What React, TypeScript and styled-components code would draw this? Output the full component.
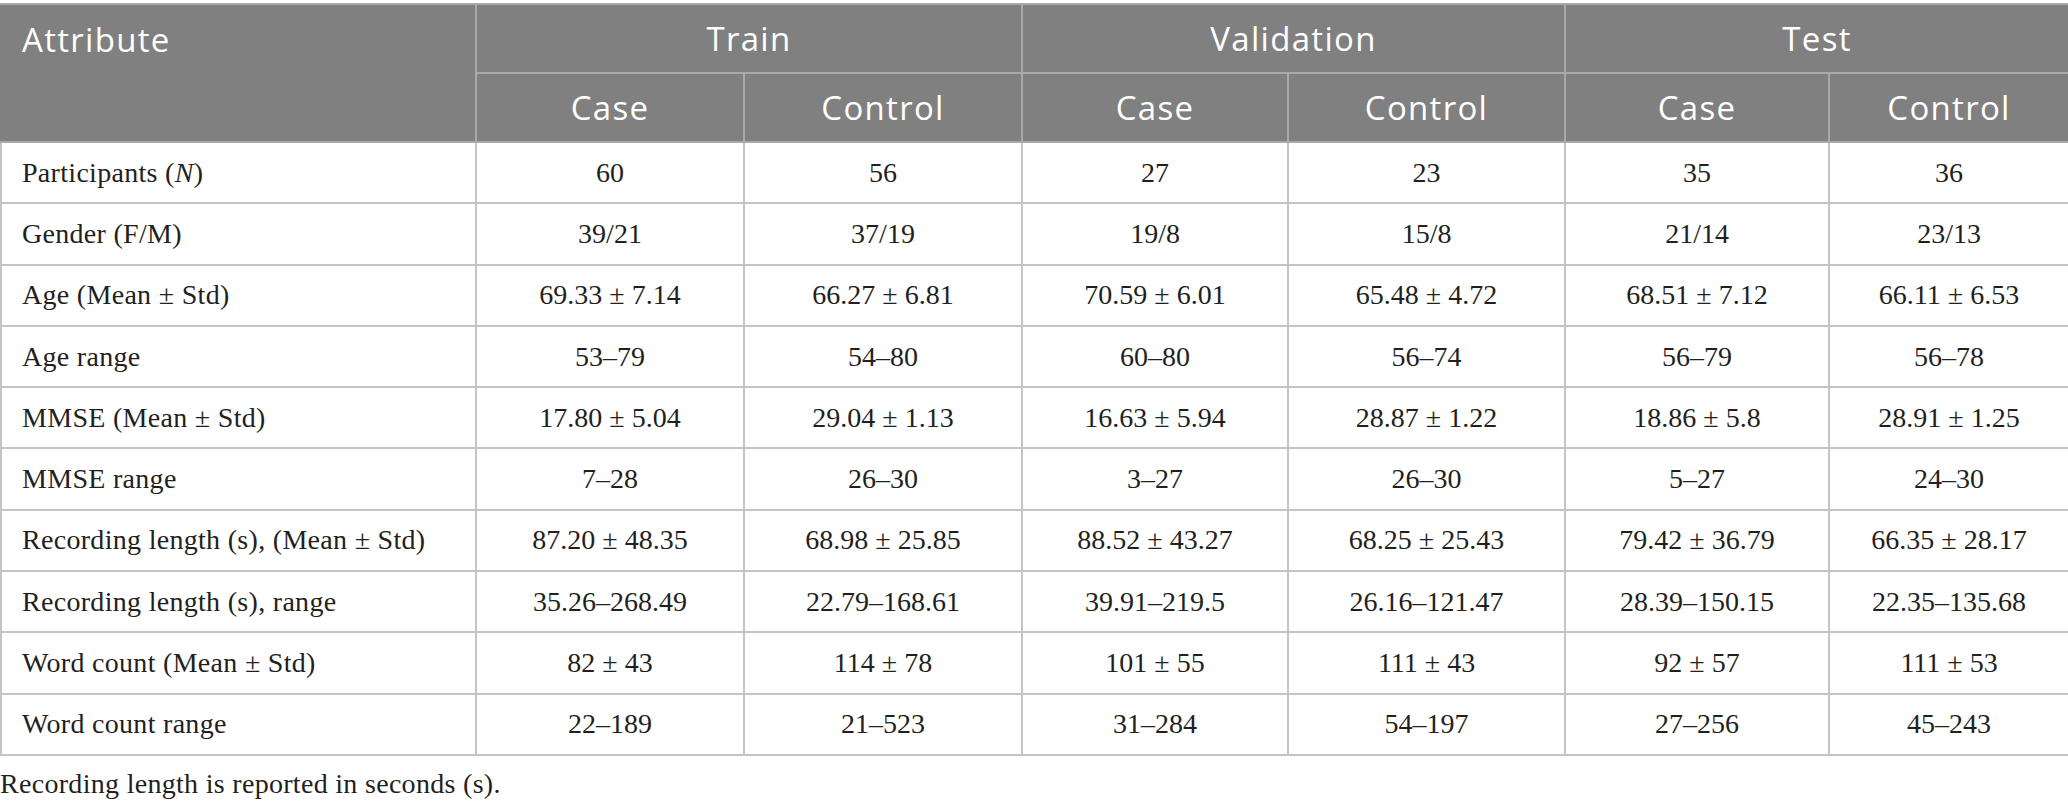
import React from "react";
import styled, { createGlobalStyle } from "styled-components";

const GlobalStyle = createGlobalStyle`
  body {
    margin: 0;
    background: #fff;
  }
`;

type Row = { label: React.ReactNode; values: string[] };

const rows: Row[] = [
  {
    label: (
      <>
        Participants (<i>N</i>)
      </>
    ),
    values: ["60", "56", "27", "23", "35", "36"],
  },
  { label: "Gender (F/M)", values: ["39/21", "37/19", "19/8", "15/8", "21/14", "23/13"] },
  {
    label: "Age (Mean ± Std)",
    values: ["69.33 ± 7.14", "66.27 ± 6.81", "70.59 ± 6.01", "65.48 ± 4.72", "68.51 ± 7.12", "66.11 ± 6.53"],
  },
  { label: "Age range", values: ["53–79", "54–80", "60–80", "56–74", "56–79", "56–78"] },
  {
    label: "MMSE (Mean ± Std)",
    values: ["17.80 ± 5.04", "29.04 ± 1.13", "16.63 ± 5.94", "28.87 ± 1.22", "18.86 ± 5.8", "28.91 ± 1.25"],
  },
  { label: "MMSE range", values: ["7–28", "26–30", "3–27", "26–30", "5–27", "24–30"] },
  {
    label: "Recording length (s), (Mean ± Std)",
    values: ["87.20 ± 48.35", "68.98 ± 25.85", "88.52 ± 43.27", "68.25 ± 25.43", "79.42 ± 36.79", "66.35 ± 28.17"],
  },
  {
    label: "Recording length (s), range",
    values: ["35.26–268.49", "22.79–168.61", "39.91–219.5", "26.16–121.47", "28.39–150.15", "22.35–135.68"],
  },
  {
    label: "Word count (Mean ± Std)",
    values: ["82 ± 43", "114 ± 78", "101 ± 55", "111 ± 43", "92 ± 57", "111 ± 53"],
  },
  { label: "Word count range", values: ["22–189", "21–523", "31–284", "54–197", "27–256", "45–243"] },
];

const colWidths = [475, 268, 278, 266, 277, 264, 240];
const groups = ["Train", "Validation", "Test"];

const App: React.FC = () => {
  return (
    <>
      <GlobalStyle />
      <Page>
        <Table>
          <colgroup>
            {colWidths.map((w, i) => (
              <col key={i} style={{ width: w }} />
            ))}
          </colgroup>
          <thead>
            <tr>
              <HeadCell rowSpan={2} $top>
                Attribute
              </HeadCell>
              {groups.map((g) => (
                <HeadCell key={g} colSpan={2} $center>
                  {g}
                </HeadCell>
              ))}
            </tr>
            <SubHeadRow>
              {groups.map((g) => (
                <React.Fragment key={g}>
                  <HeadCell $center>Case</HeadCell>
                  <HeadCell $center>Control</HeadCell>
                </React.Fragment>
              ))}
            </SubHeadRow>
          </thead>
          <tbody>
            {rows.map((row, i) => (
              <BodyRow key={i}>
                <LabelCell>{row.label}</LabelCell>
                {row.values.map((v, j) => (
                  <ValueCell key={j}>{v}</ValueCell>
                ))}
              </BodyRow>
            ))}
          </tbody>
        </Table>
        <Footnote>Recording length is reported in seconds (s).</Footnote>
      </Page>
    </>
  );
};

export default App;

const Page = styled.div`
  width: 2068px;
  padding-top: 3px;
`;

const Table = styled.table`
  width: 2068px;
  table-layout: fixed;
  border-collapse: collapse;
`;

const HeadCell = styled.th<{ $center?: boolean; $top?: boolean }>`
  background: #808080;
  color: #fff;
  font-family: "Open Sans", "Noto Sans", sans-serif;
  font-weight: 400;
  font-size: 33px;
  letter-spacing: 1.3px;
  text-align: ${(p) => (p.$center ? "center" : "left")};
  vertical-align: ${(p) => (p.$top ? "top" : "middle")};
  height: 67px;
  padding: ${(p) => (p.$top ? "13px 20px 0" : "0 10px")};
  border: 2px solid #a9a9a9;
  border-left-color: #808080;
  line-height: 44px;

  &:first-child {
    border-left: 2px solid #808080;
  }
`;

const SubHeadRow = styled.tr`
  & > th {
    height: 67px;
  }
`;

const BodyRow = styled.tr`
  height: 61.3px;
`;

const LabelCell = styled.td`
  font-family: "Liberation Serif", "Times New Roman", serif;
  font-size: 28px;
  letter-spacing: 0.3px;
  color: #231f20;
  text-align: left;
  padding: 0 10px 0 20px;
  border: 2px solid #c4c4c4;
  white-space: nowrap;

  i {
    font-style: italic;
  }
`;

const ValueCell = styled.td`
  font-family: "Liberation Serif", "Times New Roman", serif;
  font-size: 28px;
  color: #231f20;
  text-align: center;
  padding: 0 6px;
  border: 2px solid #c4c4c4;
  white-space: nowrap;
`;

const Footnote = styled.p`
  margin: 12px 0 0;
  font-family: "Liberation Serif", "Times New Roman", serif;
  font-size: 28px;
  letter-spacing: 0.3px;
  color: #231f20;
`;
